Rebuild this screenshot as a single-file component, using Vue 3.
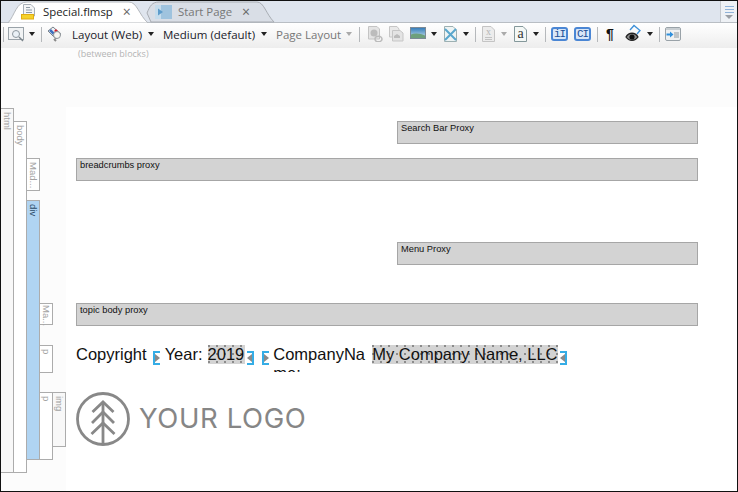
<template>
  <div class="window">
    <div class="tabstrip">
      <svg class="tabshapes" width="280" height="22" viewBox="0 0 280 22">
        <path d="M146 12 C149 5 151 1 158 1 L256 1 C263 1 265 13 273 21 L150 21 Z" fill="#d9dee6" stroke="#a9adb3" />
        <path d="M7 22 C14 14 15 1 26 1 L128 1 C136 1 138 14 147 22 Z" fill="#fff" stroke="#b4b8bd" />
      </svg>
      <div class="tab active">
        <svg class="tabicon" width="16" height="16" viewBox="0 0 16 16">
          <path d="M3.500 .5H11L14.500 4V12H3.500Z" fill="#f4f5f6" stroke="#a8b0b8" />
          <path d="M6 3.500H10M6 6H12M6 8.500H12" stroke="#8d9aa6" />
          <rect x="1.500" y="10.500" width="12" height="4.500" fill="#f5d22b" stroke="#e0ad12" />
        </svg>
        <span class="tabtext">Special.flmsp</span>
        <span class="tabclose">×</span>
      </div>
      <div class="tab idle">
        <svg class="tabicon" width="17" height="14" viewBox="0 0 17 14">
          <rect width="17" height="14" fill="#9fc3de" />
          <rect width="6" height="14" fill="#c5dcec" />
          <path d="M3 3.500L8 7L3 10.500Z" fill="#5d9ccb" />
        </svg>
        <span class="tabtext">Start Page</span>
        <span class="tabclose">×</span>
      </div>
      <div class="listbtn">
        <i></i><i></i><i></i>
        <b></b>
      </div>
    </div>

    <div class="toolbar">
      <span class="sep first"></span>
      <svg class="ic w16" viewBox="0 0 16 16">
        <rect x=".5" y="1.500" width="15" height="12" fill="#f1f3f4" stroke="#9aa3a9" />
        <circle cx="8" cy="8" r="3.500" fill="#eaf1f6" stroke="#8d979e" />
        <path d="M11 11L15 15" stroke="#7b858c" stroke-width="1.500" />
      </svg>
      <span class="caret c1"></span>
      <span class="sep s1"></span>
      <svg class="ic w16" viewBox="0 0 16 16">
        <path d="M1 5L6 1L14 8L9 13Z" fill="#eef0f2" stroke="#77828c" />
        <path d="M3 4L7 8" stroke="#3b6fbf" stroke-width="2.500" />
        <path d="M8 4L10 6" stroke="#d6182b" stroke-width="2.500" />
        <circle cx="10" cy="9" r="3.500" fill="#f6f6f2" stroke="#8f9499" />
        <path d="M7 13L9 15" stroke="#888" stroke-width="2" />
      </svg>
      <span class="menu m1">Layout (Web)</span>
      <span class="caret c2"></span>
      <span class="menu m2">Medium (default)</span>
      <span class="caret c3"></span>
      <span class="menu m3 off">Page Layout</span>
      <span class="caret c4 off"></span>
      <span class="sep s2"></span>

      <svg class="ic w16 i1" viewBox="0 0 16 16">
        <path d="M1.500 .5H10L12.500 3V13H1.500Z" fill="#e4e4e4" stroke="#c4c4c4" />
        <circle cx="7" cy="7" r="3.500" fill="#bcbcbc" />
        <path d="M8 13a2.500 2 0 0 1 7 0a2.500 2 0 0 1-7 0" fill="none" stroke="#bbb" stroke-width="1.500" />
      </svg>
      <svg class="ic w16 i2" viewBox="0 0 16 16">
        <path d="M1.500 .5H9L11 3V11H1.500Z" fill="#e9e9e9" stroke="#c6c6c6" />
        <path d="M4.500 4.500H12L15 7V15H4.500Z" fill="#e4e4e4" stroke="#c6c6c6" />
        <path d="M6 10L9 8L12 10V12H6Z" fill="#bcbcbc" />
      </svg>
      <svg class="ic w16 i3" viewBox="0 0 16 12">
        <defs>
          <linearGradient id="sky" x1="0" y1="0" x2="0" y2="1">
            <stop offset="0" stop-color="#2f79b8" />
            <stop offset="1" stop-color="#cfe6ee" />
          </linearGradient>
        </defs>
        <rect x=".5" y=".5" width="15" height="11" fill="url(#sky)" stroke="#7c8a96" />
        <path d="M1 7.500C5 5.500 11 6.500 15 8.500V11H1Z" fill="#6ea07c" />
      </svg>
      <span class="caret c5"></span>
      <svg class="ic w13 i4" viewBox="0 0 13 16">
        <path d="M.5 .5H9L12.500 4V15.500H.5Z" fill="#eef4f4" stroke="#9db0b2" />
        <path d="M1 3L12 14M12 3L1 14" stroke="#5aa7cd" stroke-width="2" />
      </svg>
      <span class="caret c6"></span>
      <span class="sep s3"></span>

      <svg class="ic w13 i5" viewBox="0 0 13 16">
        <path d="M.5 .5H9L12.500 4V15.500H.5Z" fill="#ececec" stroke="#c4c4c4" />
        <path d="M3 11.500H10M3 13.500H10" stroke="#c2c2c2" />
      </svg>
      <span class="glyph g-x">x</span>
      <span class="caret c7 off"></span>
      <svg class="ic w13 i6" viewBox="0 0 13 16">
        <path d="M.5 .5H9L12.500 4V15.500H.5Z" fill="#f4f8f6" stroke="#84989b" />
      </svg>
      <span class="glyph g-a">a</span>
      <span class="caret c8"></span>
      <span class="sep s4"></span>

      <span class="blue b1">iI</span>
      <span class="blue b2">CI</span>
      <span class="sep s5"></span>
      <span class="para">¶</span>
      <svg class="ic eye" viewBox="0 0 17 19">
        <path d="M5 6L9 1.500L15 6.500L12 10" fill="none" stroke="#3b8fd8" stroke-width="1.300" />
        <path d="M1 13C4 8 10 8 13 13C10 17.500 4 17.500 1 13Z" fill="#8d8d8d" stroke="#222" stroke-width="1.300" />
        <circle cx="7" cy="13" r="2.600" fill="#111" />
      </svg>
      <span class="caret c9"></span>
      <span class="sep s6"></span>
      <svg class="ic last" viewBox="0 0 16 14">
        <rect x=".5" y=".5" width="15" height="13" rx="1.500" fill="#eef0f1" stroke="#99a2a8" />
        <rect x="1" y="1" width="14" height="2" fill="#c8ced2" />
        <path d="M9 6H14M9 8H14M9 10H14" stroke="#8e979d" />
        <path d="M1.500 6.500H5V4.500L8.500 7.500L5 10.500V8.500H1.500Z" fill="#2e8fdc" />
      </svg>
    </div>

    <div class="between">(between blocks)</div>

    <div class="body">
      <div class="gutter">
        <div v-for="(col, i) in columns" :key="i" class="gcol">
          <div
            v-for="tag in col"
            :key="tag.label + tag.top"
            class="gtag"
            :class="{ on: tag.on, shade: tag.shade }"
            :style="{ marginTop: tag.top + 'px', height: tag.h + 'px', paddingTop: (tag.pad ?? 3) + 'px' }"
          >{{ tag.label }}</div>
        </div>
      </div>

      <div class="page">
        <div class="proxy half first-proxy">Search Bar Proxy</div>
        <div class="proxy crumbs">breadcrumbs proxy</div>
        <div class="proxy half menu-proxy">Menu Proxy</div>
        <div class="proxy topic">topic body proxy</div>

        <div class="footer">
          <span class="word">Copyright</span>
          <span class="brk open"></span>
          <span class="word year">Year:</span>
          <span class="val v-year">2019</span>
          <span class="brk close"></span>
          <span class="brk open second"></span>
          <span class="word cname">CompanyName:</span>
          <span class="val v-name">My Company Name, LLC</span>
          <span class="brk close"></span>
        </div>

        <div class="logo">
          <svg width="54" height="54" viewBox="0 0 54 54">
            <circle cx="27" cy="27" r="25.500" fill="none" stroke="#888" stroke-width="2.800" />
            <path d="M27 10V53" stroke="#888" stroke-width="2.800" />
            <path d="M16.500 20L27 10L37.500 20M16 31L27 20L38 31M15.500 42L27 31L38.500 42" fill="none" stroke="#888" stroke-width="2.800" />
          </svg>
          <span class="logotext">YOUR LOGO</span>
        </div>
      </div>
    </div>
  </div>
</template>

<script setup>
const columns = [
  [{ label: 'html', top: 1, h: 365, shade: true }],
  [{ label: 'body', top: 14, h: 352 }],
  [
    { label: 'Mad...', top: 51, h: 33 },
    { label: 'div', top: 9, h: 260, on: true }
  ],
  [
    { label: 'Ma...', top: 196, h: 22, pad: 1 },
    { label: 'p', top: 20, h: 28 },
    { label: 'p', top: 19, h: 68 }
  ],
  [{ label: 'img', top: 285, h: 55, shade: true }]
]
</script>

<style>
html, body {
  margin: 0;
  background: #fff;
}
</style>

<style scoped>
.window {
  width: 738px;
  height: 492px;
  box-sizing: border-box;
  border: 1px solid #111;
  display: flex;
  flex-direction: column;
  overflow: hidden;
  font-family: "Open Sans", "Liberation Sans", sans-serif;
  background: #fff;
}

/* tabs */
.tabstrip {
  height: 21px;
  flex: none;
  display: flex;
  position: relative;
  background: #dfe5ee;
  border-bottom: 1px solid #b9bec4;
}
.tabshapes {
  position: absolute;
  left: 0;
  top: 0;
}
.tab {
  position: relative;
  display: flex;
  align-items: center;
  height: 21px;
  font-size: 11.400px;
}
.tab.active {
  width: 145px;
  padding-left: 19px;
  box-sizing: border-box;
  color: #222;
}
.tab.idle {
  color: #777;
  padding-left: 9px;
}
.tabicon {
  flex: none;
  margin-right: 7px;
}
.tab.idle .tabicon {
  margin-right: 6px;
}
.tabtext {
  white-space: nowrap;
}
.tabclose {
  margin-left: 10px;
  font-size: 14px;
  color: #666;
  line-height: 1;
}
.listbtn {
  margin-left: auto;
  width: 17px;
  height: 21px;
  box-sizing: border-box;
  background: #eef1f5;
  border-left: 1px solid #c4c8cd;
  display: flex;
  flex-direction: column;
  align-items: center;
  gap: 2px;
  padding-top: 5px;
}
.listbtn i {
  display: block;
  width: 9px;
  height: 1px;
  background: #8fb2d8;
}
.listbtn b {
  width: 0;
  height: 0;
  border: 4px solid transparent;
  border-top-color: #9a9fa5;
  border-bottom: 0;
}

/* toolbar */
.toolbar {
  height: 25px;
  flex: none;
  box-sizing: border-box;
  padding: 0 0 3px 2px;
  display: flex;
  align-items: center;
  background: linear-gradient(#fff, #f7f7f7 45%, #ededed);
  font-size: 11.500px;
  color: #1a1a2a;
}
.sep {
  width: 1px;
  height: 15px;
  background: #b5b8bb;
  flex: none;
}
.ic {
  flex: none;
  display: block;
}
.w16 { width: 16px; height: 16px; }
.w13 { width: 13px; height: 16px; }
.eye { width: 17px; height: 19px; margin-top: -2px; margin-left: 9px; }
.last { width: 16px; height: 14px; margin-left: 5px; }
.caret {
  width: 0;
  height: 0;
  flex: none;
  border: 3px solid transparent;
  border-top: 4px solid #222;
  border-bottom: 0;
}
.caret.off { border-top-color: #aaa; }
.first + .ic { margin-left: 4px; }
.c1 { margin-left: 5px; }
.s1 { margin-left: 6px; }
.s1 + .ic { margin-left: 5px; }
.menu {
  white-space: nowrap;
  flex: none;
}
.m1 { margin-left: 9px; width: 71px; }
.c2 { margin-left: 5px; }
.m2 { margin-left: 9px; width: 93px; }
.c3 { margin-left: 5px; }
.m3 { margin-left: 9px; width: 65px; }
.menu.off { color: #777; }
.c4 { margin-left: 5px; }
.s2 { margin-left: 7px; }
.i1 { margin-left: 7px; }
.i2 { margin-left: 5px; }
.i3 { margin-left: 6px; height: 12px; margin-top: -3px; }
.c5 { margin-left: 5px; }
.i4 { margin-left: 7px; }
.c6 { margin-left: 6px; }
.s3 { margin-left: 6px; }
.i5 { margin-left: 6px; }
.glyph {
  font-family: "Liberation Serif", serif;
  flex: none;
  width: 13px;
  margin-left: -13px;
  text-align: center;
  line-height: 1;
}
.g-x { font-size: 10px; color: #b5b5b5; margin-top: -5px; }
.g-a { font-size: 14px; color: #333; }
.c7 { margin-left: 6px; }
.i6 { margin-left: 7px; }
.c8 { margin-left: 6px; }
.s4 { margin-left: 6px; }
.blue {
  flex: none;
  box-sizing: border-box;
  width: 17px;
  height: 14px;
  border: 2px solid #4a86d4;
  border-radius: 3px;
  background: #d8e7f8;
  color: #1d4f96;
  font: 11px/10px "Liberation Mono", monospace;
  letter-spacing: -1px;
  text-align: center;
}
.b1 { margin-left: 5px; }
.b2 { margin-left: 6px; }
.s5 { margin-left: 6px; }
.para {
  flex: none;
  width: 10px;
  margin-left: 8px;
  font: 700 14px/1 "Liberation Sans", sans-serif;
  color: #111;
}
.c9 { margin-left: 5px; }
.s6 { margin-left: 6px; }

.between {
  height: 59px;
  flex: none;
  box-sizing: border-box;
  background: #fcfcfc;
  padding: 0 0 0 77px;
  font-size: 9px;
  line-height: 12px;
  color: #b4b4b4;
}

/* structure bars + page */
.body {
  flex: 1;
  min-height: 0;
  display: flex;
}
.gutter {
  width: 65px;
  flex: none;
  display: flex;
  background: #fcfcfc;
}
.gcol {
  width: 13px;
  flex: none;
}
.gtag {
  box-sizing: border-box;
  background: #fff;
  border: 1px solid #acacac;
  border-left: 0;
  writing-mode: vertical-rl;
  font: 9.500px/12px "Liberation Sans", sans-serif;
  color: #a2a2a2;
  white-space: nowrap;
}
.gtag.shade { background: #f8f8f8; }
.gtag.on {
  background: #b0d4f2;
  color: #2b4a66;
}

.page {
  flex: 1;
  min-width: 0;
  background: #fff;
  box-sizing: border-box;
  padding: 14px 39px 0 10px;
}
.proxy {
  box-sizing: border-box;
  height: 23px;
  background: #d3d3d3;
  border: 1px solid #a6a6a6;
  padding: 1px 3px 0;
  font: 9.300px/11px "Liberation Sans", sans-serif;
  color: #111;
}
.half {
  width: 301px;
  margin-left: auto;
}
.crumbs { margin-top: 14px; }
.menu-proxy { margin-top: 61px; }
.topic { margin-top: 38px; }

.footer {
  margin-top: 19px;
  display: flex;
  align-items: flex-start;
  font: 16.500px/19px "Liberation Sans", sans-serif;
  color: #111;
}
.word { white-space: nowrap; }
.brk {
  width: 7px;
  height: 14px;
  margin-top: 6px;
  box-sizing: border-box;
  border: 2px solid #35ade6;
  position: relative;
  flex: none;
}
.brk.open {
  border-right: 0;
  margin-left: 6px;
}
.brk.close {
  border-left: 0;
  margin-left: 2px;
}
.brk::after {
  content: "";
  position: absolute;
  top: 1px;
  border: 4px solid transparent;
}
.brk.open::after {
  left: 0;
  border-left: 5px solid #8a8a8a;
  border-right: 0;
}
.brk.close::after {
  right: 0;
  border-right: 5px solid #8a8a8a;
  border-left: 0;
}
.brk.second { margin-left: 8px; }
.year { margin-left: 5px; }
.val {
  white-space: nowrap;
  background-color: #d3d3d3;
  background-image: radial-gradient(circle at 1px 1px, #8a8a8a .7px, transparent 1px);
  background-size: 8px 8px;
}
.v-year { margin-left: 5px; padding-right: 1px; }
.cname {
  margin-left: 4px;
  width: 93px;
  height: 27px;
  white-space: normal;
  word-break: break-all;
  overflow: hidden;
}
.v-name { margin-left: 6px; }

.logo {
  margin-top: 20px;
  display: flex;
  align-items: center;
}
.logotext {
  margin-left: 9px;
  font: 400 27.500px/1 Inter, Lato, sans-serif;
  letter-spacing: .6px;
  color: #868686;
}
</style>
